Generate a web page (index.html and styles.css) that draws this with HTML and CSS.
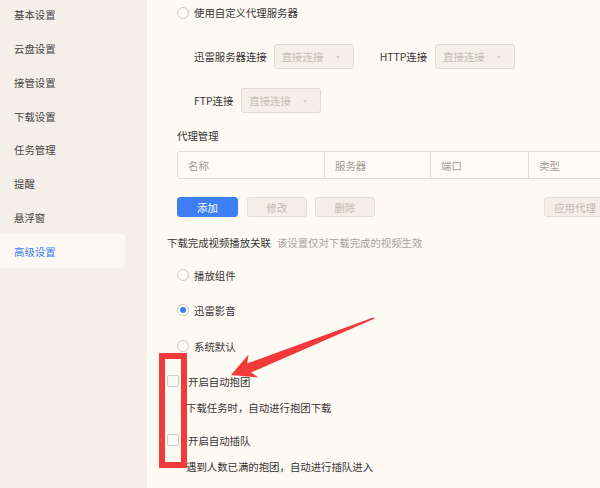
FILE: index.html
```html
<!DOCTYPE html>
<html lang="zh-CN">
<head>
<meta charset="utf-8">
<title>高级设置</title>
<link rel="stylesheet" href="styles.css">
</head>
<body>
<div class="app">
  <aside class="sidebar">
    <ul class="nav">
      <li class="nav-item">基本设置</li>
      <li class="nav-item">云盘设置</li>
      <li class="nav-item">接管设置</li>
      <li class="nav-item">下载设置</li>
      <li class="nav-item">任务管理</li>
      <li class="nav-item">提醒</li>
      <li class="nav-item">悬浮窗</li>
      <li class="nav-item active">高级设置</li>
    </ul>
  </aside>
  <main class="content">
    <div class="row row-custom"><span class="radio"></span><span>使用自定义代理服务器</span></div>

    <div class="row row-select row-sel1">
      <span class="lbl">迅雷服务器连接</span>
      <div class="select">直接连接<span class="caret"></span></div>
      <span class="lbl lbl-http">HTTP连接</span>
      <div class="select">直接连接<span class="caret"></span></div>
    </div>

    <div class="row row-select row-sel2">
      <span class="lbl lbl-ftp">FTP连接</span>
      <div class="select">直接连接<span class="caret"></span></div>
    </div>

    <div class="row row-title">代理管理</div>

    <div class="table">
      <div class="cell c1">名称</div>
      <div class="cell c2">服务器</div>
      <div class="cell c3">端口</div>
      <div class="cell c4">类型</div>
    </div>

    <div class="row row-btns">
      <button class="btn btn-primary">添加</button>
      <button class="btn btn-disabled">修改</button>
      <button class="btn btn-disabled">删除</button>
      <button class="btn btn-disabled btn-apply">应用代理</button>
    </div>

    <div class="row row-section"><span>下载完成视频播放关联</span><span class="hint">该设置仅对下载完成的视频生效</span></div>

    <div class="row row-r1"><span class="radio"></span><span>播放组件</span></div>
    <div class="row row-r2"><span class="radio checked"></span><span>迅雷影音</span></div>
    <div class="row row-r3"><span class="radio"></span><span>系统默认</span></div>

    <div class="row row-c1"><span class="checkbox"></span><span>开启自动抱团</span></div>
    <div class="row row-sub1 sub">下载任务时，自动进行抱团下载</div>
    <div class="row row-c2"><span class="checkbox"></span><span>开启自动插队</span></div>
    <div class="row row-sub2 sub">遇到人数已满的抱团，自动进行插队进入</div>
  </main>
</div>
<svg class="annot" width="600" height="488" viewBox="0 0 600 488" xmlns="http://www.w3.org/2000/svg">
  <rect x="162" y="356" width="22" height="109" fill="none" stroke="#f23a3a" stroke-width="6"/>
  <polygon fill="#f23a3a" points="231,375 258.5,377.5 251,372.5 374.3,318.7 373.7,317.3 247.2,363.5 248.5,354.5"/>
</svg>
</body>
</html>
```
FILE: styles.css
```css
* {
  box-sizing: border-box;
  margin: 0;
  padding: 0;
}

html, body {
  width: 600px;
  height: 488px;
  overflow: hidden;
}

body {
  font-family: "Noto Sans CJK SC", "Microsoft YaHei", sans-serif;
  font-size: 10.4px;
  color: #363636;
  background: #fdf9f3;
  position: relative;
}

.app {
  display: flex;
  height: 488px;
}

.sidebar {
  width: 147px;
  flex: none;
  background: #f4efe9;
}

.nav {
  list-style: none;
  margin-top: -2px;
}

.nav-item {
  height: 33.75px;
  width: 125px;
  display: flex;
  align-items: center;
  padding-left: 14px;
  border-radius: 0 4px 4px 0;
  color: #444;
}

.nav-item.active {
  background: #fcf8f3;
  color: #3d7ef0;
}

.content {
  flex: 1;
  min-width: 0;
  padding-left: 30px;
  display: flex;
  flex-direction: column;
  overflow: hidden;
}

.row {
  display: flex;
  align-items: center;
  height: 20px;
  flex: none;
  white-space: nowrap;
}

.row-custom { height: 25px; }

.radio {
  width: 12px;
  height: 12px;
  border: 1px solid #cfc8c1;
  border-radius: 50%;
  background: #fefcf9;
  margin-right: 5px;
  flex: none;
  display: flex;
  align-items: center;
  justify-content: center;
}

.radio.checked::after {
  content: "";
  width: 6px;
  height: 6px;
  border-radius: 50%;
  background: #3d7ef0;
}

.checkbox {
  width: 12px;
  height: 12px;
  border: 1px solid #d3ccc4;
  border-radius: 2px;
  background: #fdfaf6;
  margin-right: 9px;
  flex: none;
}

.row-select {
  height: 25px;
  padding-left: 17px;
}

.row-sel1 { margin-top: 19px; }
.row-sel2 { margin-top: 19px; }

.lbl { margin-right: 7px; }
.lbl-http { margin-left: 26px; margin-right: 8px; }
.lbl-ftp { margin-right: 8px; }

.select {
  position: relative;
  width: 80px;
  height: 25px;
  border: 1px solid #e3dbd2;
  border-radius: 3px;
  background: #f4efe8;
  color: #c6beb6;
  padding-left: 7px;
  display: flex;
  align-items: center;
}

.caret {
  position: absolute;
  right: 13px;
  top: 11px;
  width: 0;
  height: 0;
  border-left: 2.5px solid transparent;
  border-right: 2.5px solid transparent;
  border-top: 3px solid #d6cfc7;
}

.row-title {
  margin-top: 12px;
}

.table {
  margin-top: 6px;
  display: flex;
  height: 28px;
  width: 460px;
  flex: none;
  border: 1px solid #e4dcd3;
  border-radius: 3px 0 0 3px;
  background: #fefbf7;
  color: #a29c96;
}

.cell {
  display: flex;
  align-items: center;
  padding-left: 10px;
  border-right: 1px solid #e4dcd3;
  flex: none;
}

.c1 { width: 147px; }
.c2 { width: 106px; }
.c3 { width: 98px; }
.c4 { width: 110px; border-right: none; }

.row-btns {
  margin-top: 18px;
  gap: 8px;
}

.btn {
  font: inherit;
  height: 20px;
  width: 60px;
  border-radius: 3px;
  border: 1px solid #e6ded5;
  background: #f3eee7;
  color: #c2bab2;
  display: flex;
  align-items: center;
  justify-content: center;
  flex: none;
}

.btn-primary {
  width: 61px;
  margin-right: 1px;
  background: #3d7ef2;
  border-color: #3d7ef2;
  color: #fff;
}

.btn-apply {
  margin-left: auto;
  width: 62px;
  margin-right: -6px;
}

.row-section {
  margin-top: 15px;
  margin-left: -10px;
}

.hint {
  color: #a8a29c;
  margin-left: 6px;
}

.row-r1 { margin-top: 13px; }
.row-r2 { margin-top: 15px; }
.row-r3 { margin-top: 16px; }

.row-c1 { margin-top: 15px; margin-left: -10px; }
.row-c2 { margin-top: 13px; margin-left: -10px; }

.sub { margin-left: 9px; }
.row-sub1 { margin-top: 6px; }
.row-sub2 { margin-top: 6px; }

.annot {
  position: absolute;
  left: 0;
  top: 0;
  pointer-events: none;
}
```
